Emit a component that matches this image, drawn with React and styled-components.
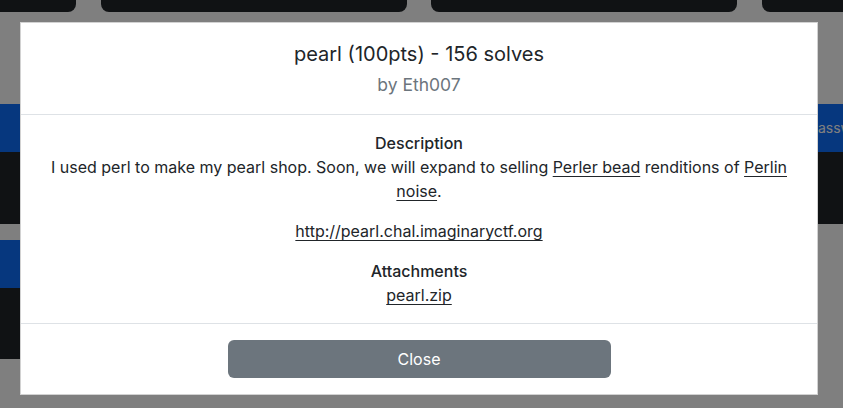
import React from 'react';
import styled, { createGlobalStyle } from 'styled-components';

const GlobalStyle = createGlobalStyle`
    * {
        box-sizing: border-box;
    }
    body {
        margin: 0;
        overflow: hidden;
        background: #ffffff;
        font-family: Inter, "Noto Sans", "DejaVu Sans", sans-serif;
        color: #212529;
    }
`;

const challenge = {
    name: 'pearl',
    points: 100,
    solves: 156,
    author: 'Eth007',
    url: 'http://pearl.chal.imaginaryctf.org',
    attachments: ['pearl.zip'],
};

const App = () => {
    return (
        <>
            <GlobalStyle />
            <Page>
                <TopRow>
                    <TopCard />
                    <TopCard />
                    <TopCard />
                    <TopCard />
                </TopRow>
                <Section>
                    <Column>
                        <Card>
                            <CardHeader />
                            <CardBody />
                        </Card>
                        <Card>
                            <CardHeader />
                            <CardBody $short />
                        </Card>
                    </Column>
                    <SideCard>
                        <CardHeader>Password</CardHeader>
                        <CardBody />
                    </SideCard>
                </Section>
            </Page>

            <Backdrop />

            <ModalWrap>
                <Modal>
                    <ModalHeader>
                        <Title>
                            {challenge.name} ({challenge.points}pts) - {challenge.solves} solves
                        </Title>
                        <Author>by {challenge.author}</Author>
                    </ModalHeader>
                    <ModalBody>
                        <Heading>Description</Heading>
                        <Paragraph>
                            I used perl to make my pearl shop. Soon, we will expand to selling{' '}
                            <Link href="#">Perler bead</Link> renditions of{' '}
                            <Link href="#">Perlin noise</Link>.
                        </Paragraph>
                        <Paragraph>
                            <Link href="#">{challenge.url}</Link>
                        </Paragraph>
                        <Heading>Attachments</Heading>
                        {challenge.attachments.map((file) => (
                            <FileLink key={file} href="#">
                                {file}
                            </FileLink>
                        ))}
                    </ModalBody>
                    <ModalFooter>
                        <CloseButton>Close</CloseButton>
                    </ModalFooter>
                </Modal>
            </ModalWrap>
        </>
    );
};

const Page = styled.div`
    width: 1093px;
    display: flex;
    flex-direction: column;
`;

const TopRow = styled.div`
    display: grid;
    grid-template-columns: repeat(4, 306px);
    column-gap: 24.5px;
    margin-top: -60px;
    margin-left: -230px;
`;

const TopCard = styled.div`
    height: 72px;
    background: #212529;
    border-radius: 8px;
`;

const Section = styled.div`
    display: flex;
    margin-top: 92px;
`;

const Column = styled.div`
    width: 400px;
    display: flex;
    flex-direction: column;
    gap: 16px;
`;

const Card = styled.div`
    display: flex;
    flex-direction: column;
`;

const SideCard = styled(Card)`
    flex: 0 0 300px;
    margin-left: auto;
`;

const CardHeader = styled.div`
    height: 48px;
    background: #0d6efd;
    color: #ffffff;
    font-size: 14px;
    line-height: 48px;
    padding: 0 16px;
`;

const CardBody = styled.div`
    height: ${(p) => (p.$short ? '71px' : '72px')};
    background: #212529;
`;

const Backdrop = styled.div`
    position: fixed;
    inset: 0;
    background: rgba(0, 0, 0, 0.5);
`;

const ModalWrap = styled.div`
    position: fixed;
    inset: 0;
    padding: 22px 25px 0 20px;
`;

const Modal = styled.div`
    width: 798px;
    background: #ffffff;
    border: 1px solid rgba(0, 0, 0, 0.175);
    display: flex;
    flex-direction: column;
`;

const ModalHeader = styled.div`
    padding: 16px;
    border-bottom: 1px solid #dee2e6;
    text-align: center;
`;

const Title = styled.h5`
    margin: 0 0 2px;
    font-size: 20px;
    font-weight: 400;
    line-height: 30px;
    color: #212529;
`;

const Author = styled.h6`
    margin: 0;
    font-size: 17.5px;
    font-weight: 400;
    line-height: 27px;
    color: #6c757d;
`;

const ModalBody = styled.div`
    padding: 16px;
    text-align: center;
    font-size: 16px;
    line-height: 24px;
    display: flex;
    flex-direction: column;
    align-items: center;
`;

const Heading = styled.div`
    font-weight: 500;
`;

const Paragraph = styled.p`
    margin: 0 0 16px;
`;

const Link = styled.a`
    color: #212529;
    text-decoration: underline;
    text-underline-offset: 3px;
`;

const FileLink = styled(Link)`
    display: block;
`;

const ModalFooter = styled.div`
    border-top: 1px solid #dee2e6;
    padding: 16px 12px;
    display: flex;
    justify-content: center;
`;

const CloseButton = styled.button`
    width: 383px;
    height: 38px;
    border: none;
    border-radius: 6px;
    background: #6c757d;
    color: #ffffff;
    font-family: inherit;
    font-size: 16px;
    cursor: pointer;
`;

export default App;
